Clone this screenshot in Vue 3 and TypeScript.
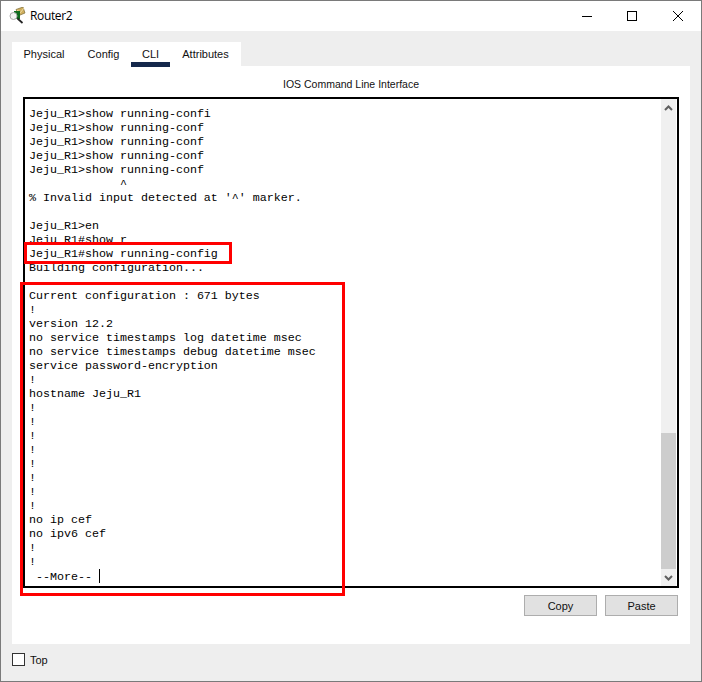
<script setup lang="ts">
const lines: string[] = [
  'Jeju_R1>show running-confi',
  'Jeju_R1>show running-conf',
  'Jeju_R1>show running-conf',
  'Jeju_R1>show running-conf',
  'Jeju_R1>show running-conf',
  '             ^',
  "% Invalid input detected at '^' marker.",
  '',
  'Jeju_R1>en',
  'Jeju_R1#show r',
  'Jeju_R1#show running-config',
  'Building configuration...',
  '',
  'Current configuration : 671 bytes',
  '!',
  'version 12.2',
  'no service timestamps log datetime msec',
  'no service timestamps debug datetime msec',
  'service password-encryption',
  '!',
  'hostname Jeju_R1',
  '!',
  '!',
  '!',
  '!',
  '!',
  '!',
  '!',
  '!',
  'no ip cef',
  'no ipv6 cef',
  '!',
  '!',
]
const tabs = [
  { name: 'Physical', active: false },
  { name: 'Config', active: false },
  { name: 'CLI', active: true },
  { name: 'Attributes', active: false },
]
</script>

<template>
  <div class="window">
    <div class="edge"></div>
    <header class="titlebar">
      <svg class="appicon" width="17" height="17" viewBox="0 0 17 17">
        <path d="M7 2.5L14 0l2 6-6 2.5z" fill="#cfae5e" stroke="#7a6a35" stroke-width=".7" />
        <path d="M8 3l3.5 2.5L15 1" fill="none" stroke="#f4e6b0" stroke-width=".8" />
        <rect x="5" y="4" width="6" height="8" fill="#0f6b1f" />
        <circle cx="4.5" cy="9" r="3.5" fill="#f4f4f4" stroke="#a8a8a8" />
        <path d="M8.5 11.5l5 4.5" stroke="#222" stroke-width="1.7" />
      </svg>
      <span class="title">Router2</span>
      <div class="controls">
        <svg width="12" height="12" viewBox="0 0 12 12"><path d="M1 6.5h10" stroke="#000" /></svg>
        <svg width="12" height="12" viewBox="0 0 12 12"><rect x="1.5" y="1.5" width="9" height="9" fill="none" stroke="#000" /></svg>
        <svg class="close" width="12" height="12" viewBox="0 0 12 12"><path d="M1 1l10 10M11 1L1 11" stroke="#000" /></svg>
      </div>
    </header>

    <main class="body">
      <nav class="tabs">
        <div v-for="t in tabs" :key="t.name" class="tab" :class="{ active: t.active }">{{ t.name }}</div>
      </nav>
      <section class="panel">
        <div class="heading">IOS Command Line Interface</div>
        <div class="terminal">
          <div class="output">
            <div v-for="(l, i) in lines" :key="i" class="line">{{ l }}</div>
            <div class="line"> --More-- <span class="caret"></span></div>
          </div>
          <div class="scrollbar">
            <svg class="arrow" width="15" height="17" viewBox="0 0 15 17"><path d="M4 11l3.5-3.5L11 11" fill="none" stroke="#606060" stroke-width="2" /></svg>
            <div class="spacer"></div>
            <div class="thumb"></div>
            <svg class="arrow" width="15" height="17" viewBox="0 0 15 17"><path d="M4 7l3.5 3.5L11 7" fill="none" stroke="#606060" stroke-width="2" /></svg>
          </div>
        </div>
        <div class="buttons">
          <button class="btn">Copy</button>
          <button class="btn">Paste</button>
        </div>
      </section>
      <footer class="bottom">
        <span class="check"></span>
        <span class="toplabel">Top</span>
      </footer>
    </main>

    <div class="mark mark-a"></div>
    <div class="mark mark-b"></div>
  </div>
</template>

<style>
html, body { margin: 0; padding: 0; background: #fff; }
</style>

<style scoped>
.window {
  position: relative;
  width: 702px;
  height: 682px;
  box-sizing: border-box;
  border: 1px solid #7a7a7a;
  display: flex;
  flex-direction: column;
  overflow: hidden;
  background: #eee;
  font-family: "Liberation Sans", Arial, sans-serif;
  color: #000;
}
.edge {
  position: absolute;
  left: 0;
  top: 59px;
  width: 1px;
  height: 391px;
  margin-left: -1px;
  background: linear-gradient(to bottom,
    #6d1a5e 0, #6d1a5e 12px, #7a7a7a 12px, #7a7a7a 34px,
    #6d1a5e 34px, #6d1a5e 58px, #0f8080 58px, #0f8080 103px,
    #7a7a7a 103px, #7a7a7a 124px, #0f8080 124px, #0f8080 178px,
    #7a7a7a 178px, #7a7a7a 201px, #0f8080 201px, #0f8080 251px,
    #333 251px, #333 259px, #0f8080 259px, #0f8080 353px,
    #7a7a7a 353px, #7a7a7a 382px, #3c1a4e 382px, #3c1a4e 391px);
}
.titlebar {
  height: 30px;
  flex: none;
  background: #fff;
  display: flex;
  align-items: center;
  padding-left: 8px;
}
.appicon { flex: none; align-self: flex-start; margin-top: 6px; }
.title {
  margin-left: 4px;
  margin-top: -2px;
  font-family: "Open Sans", "Noto Sans", sans-serif;
  font-size: 12px;
  letter-spacing: -0.35px;
}
.controls {
  margin-left: auto;
  display: flex;
  gap: 33px;
  padding-right: 17px;
  margin-top: -1px;
}
.controls svg { display: block; }
.controls .close { margin-left: 1px; }
.body {
  flex: 1;
  display: flex;
  flex-direction: column;
  padding: 11px 11px 0;
  min-height: 0;
}
.tabs {
  display: grid;
  grid-template-columns: 64px 55px 39px 71px;
  align-self: flex-start;
  height: 24px;
  background: #fff;
}
.tab {
  position: relative;
  text-align: center;
  font-size: 11px;
  line-height: 25px;
  color: #111;
}
.tab.active::after {
  content: "";
  position: absolute;
  left: 0;
  right: 0;
  bottom: 0;
  height: 5px;
  background: #14284b;
}
.panel {
  height: 578px;
  flex: none;
  background: #fff;
  box-sizing: border-box;
  padding: 0 11px;
  display: flex;
  flex-direction: column;
}
.heading {
  height: 31px;
  line-height: 36px;
  text-align: center;
  font-size: 10.5px;
  color: #111;
  flex: none;
}
.terminal {
  flex: none;
  height: 491px;
  box-sizing: border-box;
  border: 2px solid #000;
  display: flex;
  background: #fff;
}
.output {
  flex: 1;
  min-width: 0;
  padding: 8px 0 0 4px;
  overflow: hidden;
  font-family: "Liberation Mono", "Courier New", monospace;
  font-size: 11.67px;
  line-height: 14px;
  white-space: pre;
  color: #000;
}
.line { height: 14px; }
.caret {
  display: inline-block;
  width: 1px;
  height: 14px;
  background: #000;
  vertical-align: -3px;
}
.scrollbar {
  flex: none;
  width: 15px;
  margin-right: 1px;
  background: #f0f0f0;
  display: flex;
  flex-direction: column;
}
.arrow { display: block; flex: none; }
.spacer { flex: 1; }
.thumb { height: 136px; flex: none; background: #cdcdcd; }
.buttons {
  display: flex;
  justify-content: flex-end;
  gap: 8px;
  margin-top: 7px;
  margin-right: 1px;
}
.btn {
  width: 73px;
  height: 21px;
  box-sizing: border-box;
  padding: 0;
  background: #e1e1e1;
  border: 1px solid #adadad;
  font-family: "Liberation Sans", Arial, sans-serif;
  font-size: 11px;
  color: #111;
}
.bottom {
  flex: 1;
  display: flex;
  align-items: flex-start;
  padding-top: 9px;
}
.check {
  width: 13px;
  height: 13px;
  box-sizing: border-box;
  border: 1px solid #333;
  background: #fff;
}
.toplabel {
  margin-left: 5px;
  font-size: 11px;
  line-height: 14px;
  color: #111;
}
.mark {
  position: absolute;
  box-sizing: border-box;
  border: 3px solid #f00;
  pointer-events: none;
}
.mark-a { left: 23px; top: 241px; width: 208px; height: 22px; }
.mark-b { left: 19px; top: 281px; width: 325px; height: 314px; }
</style>
